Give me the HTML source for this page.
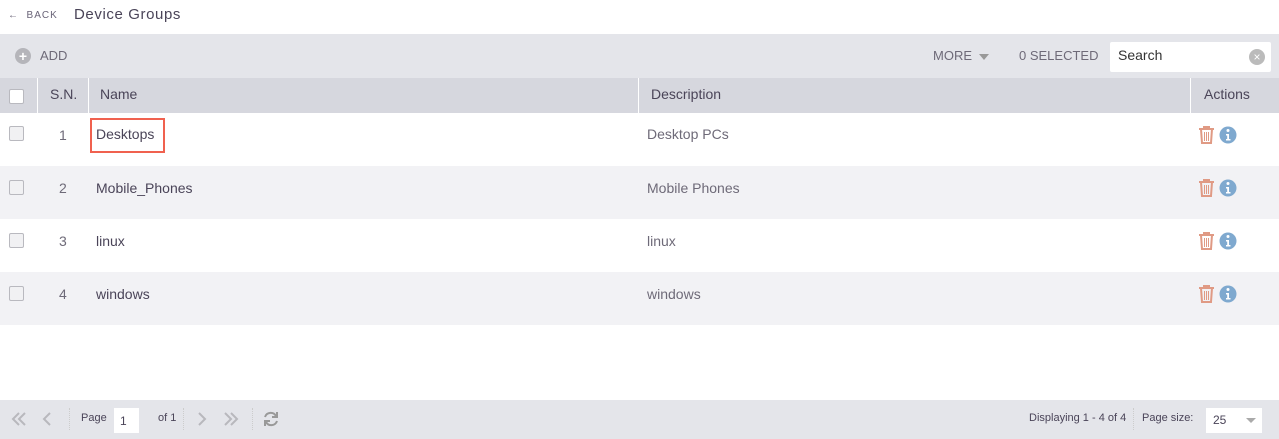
<!DOCTYPE html>
<html><head><style>
*{margin:0;padding:0;box-sizing:border-box}
body{width:1279px;height:439px;background:#fff;font-family:"Liberation Sans",sans-serif;color:#4a4458;position:relative;overflow:hidden}
.abs{position:absolute}
.top{left:0;top:0;width:1279px;height:34px;background:#fff}
.tb{left:0;top:34px;width:1279px;height:44px;background:#e4e5ea}
.hd{left:0;top:78px;width:1279px;height:35px;background:#d6d7de}
.row{left:0;width:1279px;height:53px}
.alt{background:#f2f2f5}
.cb{width:15px;height:15px;border:1px solid #b9b9bf;background:#f1f1f3;border-radius:2px}
.t{font-size:14px;white-space:nowrap}
.vl{width:1px;background:#fff;top:78px;height:35px}
.ft{left:0;top:400px;width:1279px;height:39px;background:#e4e5ea}
</style></head><body>
<div class="abs top"></div>
<div class="abs t" style="left:8px;top:10px;font-size:10px;letter-spacing:1px;color:#6a6478"><b>&#8592;</b>&nbsp; BACK</div>
<div class="abs t" style="left:74px;top:6px;font-size:15px;letter-spacing:.6px">Device Groups</div>
<div class="abs tb"></div>
<div class="abs" style="left:15px;top:48px;width:16px;height:16px;border-radius:50%;background:#b5b5ba;color:#fff;font-size:14px;line-height:16px;text-align:center;font-weight:bold">+</div>
<div class="abs t" style="left:40px;top:48px;font-size:13px;color:#6e6a78">ADD</div>
<div class="abs t" style="left:933px;top:48px;font-size:13px;color:#6e6a78">MORE</div>
<div class="abs" style="left:979px;top:54px;border:5px solid transparent;border-top:6px solid #999;border-bottom:0"></div>
<div class="abs t" style="left:1019px;top:48px;font-size:13px;color:#6e6a78">0 SELECTED</div>
<div class="abs" style="left:1110px;top:42px;width:161px;height:30px;background:#fff;border-radius:2px"></div>
<div class="abs t" style="left:1118px;top:47px;color:#333">Search</div>
<div class="abs" style="left:1249px;top:49px;width:16px;height:16px;border-radius:50%;background:#bbb;color:#fff;font-size:12px;line-height:16px;text-align:center">&#215;</div>
<div class="abs hd"></div>
<div class="abs vl" style="left:37px"></div><div class="abs vl" style="left:88px"></div><div class="abs vl" style="left:638px"></div><div class="abs vl" style="left:1190px"></div>
<div class="abs cb" style="left:9px;top:89px;background:#fff"></div>
<div class="abs t" style="left:50px;top:86px">S.N.</div>
<div class="abs t" style="left:100px;top:86px">Name</div>
<div class="abs t" style="left:651px;top:86px">Description</div>
<div class="abs t" style="left:1204px;top:86px">Actions</div>

<div class="abs row" style="top:113px"></div>
<div class="abs row alt" style="top:166px"></div>
<div class="abs row" style="top:219px"></div>
<div class="abs row alt" style="top:272px"></div>

<div class="abs cb" style="left:9px;top:126px"></div>
<div class="abs t" style="left:59px;top:127px;color:#6e6a78">1</div>
<div class="abs" style="left:90px;top:118px;width:75px;height:35px;border:2px solid #f0614f"></div>
<div class="abs t" style="left:96px;top:126px">Desktops</div>
<div class="abs t" style="left:647px;top:126px;color:#6e6a78">Desktop PCs</div>

<div class="abs cb" style="left:9px;top:180px"></div>
<div class="abs t" style="left:59px;top:180px;color:#6e6a78">2</div>
<div class="abs t" style="left:96px;top:180px">Mobile_Phones</div>
<div class="abs t" style="left:647px;top:180px;color:#6e6a78">Mobile Phones</div>

<div class="abs cb" style="left:9px;top:233px"></div>
<div class="abs t" style="left:59px;top:233px;color:#6e6a78">3</div>
<div class="abs t" style="left:96px;top:233px">linux</div>
<div class="abs t" style="left:647px;top:233px;color:#6e6a78">linux</div>

<div class="abs cb" style="left:9px;top:286px"></div>
<div class="abs t" style="left:59px;top:286px;color:#6e6a78">4</div>
<div class="abs t" style="left:96px;top:286px">windows</div>
<div class="abs t" style="left:647px;top:286px;color:#6e6a78">windows</div>

<svg class="abs" style="left:1198px;top:126px" width="42" height="230" viewBox="0 0 42 230">
<g id="a">
<path d="M1 3h15M6 3V1h5v2M3 3l1 14h9l1-14" fill="none" stroke="#e09a84" stroke-width="2"/>
<path d="M6.5 6v9M8.5 6v9M10.5 6v9" stroke="#e09a84" stroke-width="1"/>
<circle cx="30" cy="9" r="8.5" fill="#7fa9cf"/>
<circle cx="30" cy="4.5" r="1.5" fill="#fff"/>
<path d="M28 8h3v5h1.5v1.5h-4.5V13h1.2v-3.5H28z" fill="#fff"/>
</g>
<use href="#a" y="53"/><use href="#a" y="106"/><use href="#a" y="159"/>
</svg>

<div class="abs ft"></div>
<svg class="abs" style="left:10px;top:410px" width="270" height="20" viewBox="0 0 270 20" fill="none" stroke="#b8b8bd" stroke-width="2">
<path d="M9 3l-6 6 6 6M15 3l-6 6 6 6"/>
<path d="M40 3l-6 6 6 6"/>
<path d="M189 3l6 6-6 6"/>
<path d="M215 3l6 6-6 6M221 3l6 6-6 6"/>
<path d="M255 7a6 6 0 0 1 11-1M267 11a6 6 0 0 1-11 1" stroke="#999"/>
<path d="M267 2v5h-5M255 16v-5h5" stroke="#999"/>
</svg>
<div class="abs" style="left:69px;top:408px;width:1px;height:22px;border-left:1px dotted #ccc"></div>
<div class="abs" style="left:183px;top:408px;width:1px;height:22px;border-left:1px dotted #ccc"></div>
<div class="abs" style="left:252px;top:408px;width:1px;height:22px;border-left:1px dotted #ccc"></div>
<div class="abs t" style="left:81px;top:412px;font-size:11px">Page</div>
<div class="abs" style="left:114px;top:408px;width:25px;height:25px;background:#fff"></div>
<div class="abs t" style="left:120px;top:414px;font-size:12px">1</div>
<div class="abs t" style="left:158px;top:412px;font-size:11px">of 1</div>
<div class="abs t" style="left:1029px;top:412px;font-size:11px">Displaying 1 - 4 of 4</div>
<div class="abs" style="left:1133px;top:408px;width:1px;height:22px;border-left:1px dotted #ccc"></div>
<div class="abs t" style="left:1142px;top:412px;font-size:11px">Page size:</div>
<div class="abs" style="left:1206px;top:408px;width:56px;height:25px;background:#fff"></div>
<div class="abs t" style="left:1213px;top:413px;font-size:12px">25</div>
<div class="abs" style="left:1246px;top:418px;border:5px solid transparent;border-top:5px solid #aaa;border-bottom:0"></div>
</body></html>
